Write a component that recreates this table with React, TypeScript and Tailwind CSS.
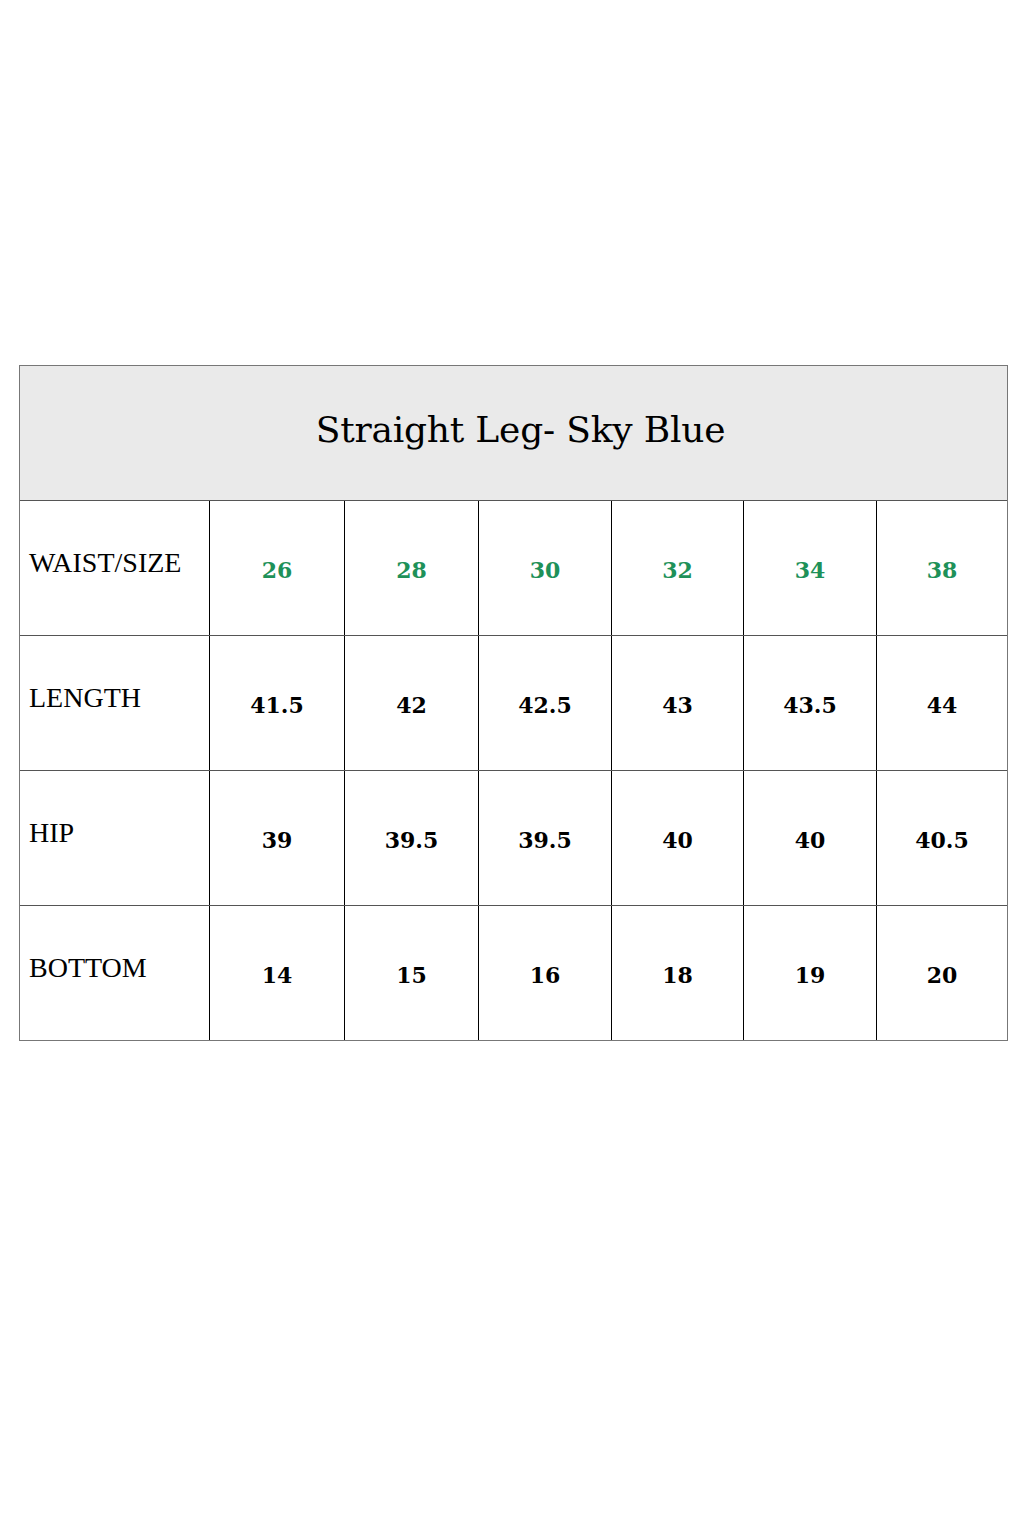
import React from "react"

const cols = ["26", "28", "30", "32", "34", "38"]

const rows = [
  { label: "LENGTH", values: ["41.5", "42", "42.5", "43", "43.5", "44"] },
  { label: "HIP", values: ["39", "39.5", "39.5", "40", "40", "40.5"] },
  { label: "BOTTOM", values: ["14", "15", "16", "18", "19", "20"] },
]

const grid = "grid grid-cols-[189px_135px_134px_133px_132px_133px_131px]"
const serif = "font-['Liberation_Serif',serif]"
const num = "font-['DejaVu_Serif',serif] font-bold text-[22px]"

function Row({ label, values, green }: { label: string; values: string[]; green?: boolean }) {
  return (
    <div className={`${grid} h-[135px] border-t border-[#555]`}>
      <div className={`flex items-center pl-[9px] pb-[10px] text-[28px] text-black ${serif}`}>{label}</div>
      {values.map((v, i) => (
        <div
          key={i}
          className={`flex items-center justify-center border-l border-black pt-[4px] ${num} ${green ? "text-[#1e9159]" : "text-black"}`}
        >
          {v}
        </div>
      ))}
    </div>
  )
}

export default function App() {
  return (
    <div className="h-[1536px] w-[1024px] bg-white pl-[19px] pt-[365px]">
      <div className="w-[989px] border border-[#777]">
        <div className="flex h-[134px] items-center justify-center bg-[#eaeaea] pb-[6px] pl-[14px]">
          <h1 className="font-['DejaVu_Serif',serif] text-[36px] tracking-[-0.2px] text-black">Straight Leg- Sky Blue</h1>
        </div>
        <Row label="WAIST/SIZE" values={cols} green />
        {rows.map((r) => (
          <Row key={r.label} label={r.label} values={r.values} />
        ))}
      </div>
    </div>
  )
}
